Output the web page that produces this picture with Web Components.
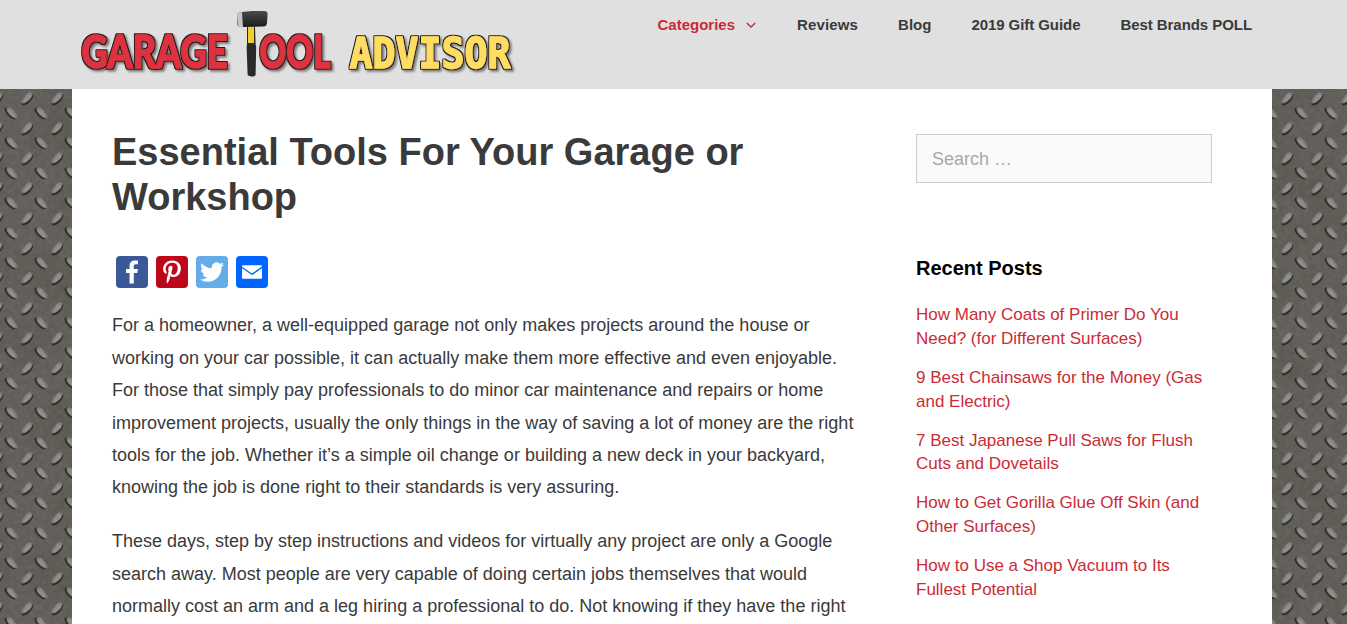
<!DOCTYPE html>
<html lang="en">
<head>
<meta charset="utf-8">
<title>Essential Tools For Your Garage or Workshop</title>
<style>
  html, body { margin: 0; height: 100%; overflow: hidden; }
  body { font-family: "Liberation Sans", Arial, sans-serif; color: #3a3a3a; }
</style>
</head>
<body>
<page-shell>
  <site-header slot="header">
    <nav-item active caret>Categories</nav-item>
    <nav-item style="letter-spacing:.15px">Reviews</nav-item>
    <nav-item>Blog</nav-item>
    <nav-item style="letter-spacing:-.07px">2019 Gift Guide</nav-item>
    <nav-item style="letter-spacing:-.06px">Best Brands POLL</nav-item>
  </site-header>
  <post-article>
    <span slot="title">Essential Tools For Your Garage or Workshop</span>
    <p>For a homeowner, a well-equipped garage not only makes projects around the house or working on your car possible, it can actually make them more effective and even enjoyable. For those that simply pay professionals to do minor car maintenance and repairs or home improvement projects, usually the only things in the way of saving a lot of money are the right tools for the job. Whether it’s a simple oil change or building a new deck in your backyard, knowing the job is done right to their standards is very assuring.</p>
    <p>These days, step by step instructions and videos for virtually any project are only a Google search away. Most people are very capable of doing certain jobs themselves that would normally cost an arm and a leg hiring a professional to do. Not knowing if they have the right</p>
  </post-article>
  <side-bar slot="aside">
    <search-box></search-box>
    <recent-posts>
      <a href="#">How Many Coats of Primer Do You Need? (for Different Surfaces)</a>
      <a href="#">9 Best Chainsaws for the Money (Gas and Electric)</a>
      <a href="#">7 Best Japanese Pull Saws for Flush Cuts and Dovetails</a>
      <a href="#">How to Get Gorilla Glue Off Skin (and Other Surfaces)</a>
      <a href="#">How to Use a Shop Vacuum to Its Fullest Potential</a>
    </recent-posts>
  </side-bar>
</page-shell>

<script>
// diamond plate texture for the page background, one big tile so the noise doesnt repeat too fast
function plateTile() {
  const lens = (x, y, angle) => `
    <g transform="translate(${x} ${y})">
      <ellipse cx="-.8" cy="1.500" rx="7.600" ry="3.300" transform="rotate(${angle})" fill="#1a1917" opacity=".7"/>
      <ellipse rx="7.200" ry="3" transform="rotate(${angle})" fill="#7b7b78"/>
      <ellipse cx="${angle < 0 ? 3 : -3}" cy="-2" rx="3" ry="1" transform="rotate(${angle})" fill="#7391b0" opacity=".7"/>
      <ellipse cy=".5" rx="5" ry="1.700" transform="rotate(${angle})" fill="#96938d" opacity=".8"/>
    </g>`;
  const svg = `<svg xmlns="http://www.w3.org/2000/svg" width="300" height="300">
    <defs>
      <filter id="n" x="0" y="0" width="100%" height="100%">
        <feTurbulence type="fractalNoise" baseFrequency="0.02" numOctaves="3" seed="7" stitchTiles="stitch"/>
        <feColorMatrix values="0 0 0 0 .12  0 0 0 0 .11  0 0 0 0 .1  3.400 0 0 0 -1.100"/>
      </filter>
      <filter id="g" x="0" y="0" width="100%" height="100%">
        <feTurbulence type="fractalNoise" baseFrequency="0.2" numOctaves="2" seed="2" stitchTiles="stitch"/>
        <feColorMatrix values="0 0 0 0 .65  0 0 0 0 .62  0 0 0 0 .56  1 0 0 0 -.35"/>
      </filter>
      <pattern id="p" width="30" height="30" patternUnits="userSpaceOnUse">
        ${lens(27, 8, -45)}${lens(-3, 8, -45)}${lens(12, 23, 45)}
      </pattern>
    </defs>
    <rect width="300" height="300" fill="#5c5852"/>
    <rect width="300" height="300" filter="url(#n)"/>
    <rect width="300" height="300" filter="url(#g)" opacity=".15"/>
    <rect width="300" height="300" fill="url(#p)"/>
  </svg>`;
  return `url("data:image/svg+xml,${encodeURIComponent(svg)}")`;
}

class PageShell extends HTMLElement {
  constructor() {
    super();
    this.attachShadow({ mode: "open" });
    this.shadowRoot.innerHTML = `
      <style>
        :host {
          display: flex;
          flex-direction: column;
          height: 100vh;
          overflow: hidden;
          background: ${plateTile()} 0 0;
        }
        .content {
          flex: 1;
          box-sizing: border-box;
          width: 1200px;
          margin-left: 72px;
          background: #fff;
          display: flex;
          padding: 0 60px 0 40px;
          gap: 60px;
        }
      </style>
      <slot name="header"></slot>
      <div class="content">
        <slot></slot>
        <slot name="aside"></slot>
      </div>
    `;
  }
}

class SiteHeader extends HTMLElement {
  constructor() {
    super();
    this.attachShadow({ mode: "open" });
    this.shadowRoot.innerHTML = `
      <style>
        :host {
          display: block;
          flex: none;
          height: 89px;
          background: #e0e0e0;
        }
        .inner {
          width: 1200px;
          margin-left: 72px;
          display: flex;
          justify-content: space-between;
          align-items: flex-start;
        }
        nav { display: flex; }
      </style>
      <div class="inner">
        <site-logo></site-logo>
        <nav><slot></slot></nav>
      </div>
    `;
  }
}

class SiteLogo extends HTMLElement {
  constructor() {
    super();
    this.attachShadow({ mode: "open" });
    this.shadowRoot.innerHTML = `
      <style>
        :host { display: block; height: 89px; margin-left: 6px; }
        svg { display: block; }
        text {
          font-family: Lato, "DejaVu Sans", sans-serif;
          font-weight: 900;
          font-size: 46px;
          stroke-width: 1.400px;
          stroke-linejoin: round;
        }
        .red { fill: #dd3340; stroke: #dd3340; }
        .yellow {
          fill: #ffdc64;
          stroke: #ffdc64;
          font-family: "DejaVu Sans Mono", monospace;
          font-weight: bold;
          font-size: 43px;
        }
      </style>
      <svg width="440" height="89" viewBox="0 0 440 89">
        <defs>
          <filter id="edge" x="-5%" y="-20%" width="110%" height="150%">
            <feMorphology in="SourceAlpha" operator="dilate" radius="1.300" result="fat"/>
            <feFlood flood-color="#241f1e"/>
            <feComposite in2="fat" operator="in" result="line"/>
            <feGaussianBlur in="fat" stdDeviation="1" result="soft"/>
            <feOffset in="soft" dx="2" dy="2" result="moved"/>
            <feFlood flood-color="#000" flood-opacity=".45"/>
            <feComposite in2="moved" operator="in" result="shade"/>
            <feMerge>
              <feMergeNode in="shade"/>
              <feMergeNode in="line"/>
              <feMergeNode in="SourceGraphic"/>
            </feMerge>
          </filter>
          <linearGradient id="head" x1="0" y1="0" x2="0" y2="1">
            <stop offset="0" stop-color="#4a4a48"/>
            <stop offset="1" stop-color="#1b1b1a"/>
          </linearGradient>
        </defs>
        <g filter="url(#edge)">
          <text class="red" data-x="3.500" data-w="146">GARAGE</text>
          <text class="red" data-x="181.500" data-w="71">OOL</text>
          <text class="yellow" data-x="271.500" data-w="161">ADVISOR</text>
        </g>
        <!-- the hammer stands in for the T -->
        <path d="M169 27h8l.6 17 .6 3-.6 27.500c-.2 1.500-1.600 2-3 2s-5-.5-5-2l-1-27.500 .4-3z" fill="#2a2a29"/>
        <rect x="170" y="27" width="6" height="16" fill="#f2cd2c"/>
        <path d="M159 13.500c4-2 12-2.500 27-2.500 3 0 3.800 1.500 3.500 4l-.5 8c-.2 2.500-1.500 3.500-4 3.500l-21 .5c-3 0-5-1-5-4z" fill="url(#head)"/>
        <path d="M159 13.500c1.500-.7 3-1.100 5-1.500l1 15.500c-3 0-5.500-1-5.500-4z" fill="#c4c6c6"/>
      </svg>
    `;
  }

  connectedCallback() {
    // squeeze each word to the width it has in the logo
    this.shadowRoot.querySelectorAll("text").forEach((t) => {
      const sx = t.dataset.w / t.getComputedTextLength();
      t.setAttribute("transform", `translate(${t.dataset.x} 68) scale(${sx} 1)`);
    });
  }
}

class NavItem extends HTMLElement {
  constructor() {
    super();
    this.attachShadow({ mode: "open" });
    const caret = this.hasAttribute("caret")
      ? `<svg width="10" height="6" viewBox="0 0 10 6"><path d="M.8 1L5 5l4.200-4" fill="none" stroke="currentColor" stroke-width="1.500"/></svg>`
      : "";
    this.shadowRoot.innerHTML = `
      <style>
        :host {
          display: flex;
          align-items: center;
          height: 48px;
          padding: 0 20px;
          font-size: 15px;
          font-weight: bold;
          color: #3a3a3a;
          cursor: pointer;
        }
        :host([active]) { color: #cb2b36; margin-right: 1px; }
        svg { margin-left: 11px; margin-top: 1px; }
      </style>
      <slot></slot>${caret}
    `;
  }
}

class PostArticle extends HTMLElement {
  constructor() {
    super();
    this.attachShadow({ mode: "open" });
    this.shadowRoot.innerHTML = `
      <style>
        :host {
          display: block;
          width: 744px;
          flex: none;
          padding-top: 41px;
          font-size: 18px;
          line-height: 32.4px;
          color: #3a3a3a;
        }
        h1 {
          margin: 0 0 36px;
          font-size: 38px;
          line-height: 45px;
          font-weight: bold;
        }
        ::slotted(p) { margin: 0 0 21.6px; }
      </style>
      <h1><slot name="title"></slot></h1>
      <share-bar></share-bar>
      <slot></slot>
    `;
  }
}

class ShareBar extends HTMLElement {
  constructor() {
    super();
    this.attachShadow({ mode: "open" });
    const icons = [
      ["#3b5998", "M17.78 27.5V17.008h3.522l.527-4.090h-4.050v-2.610c0-1.182.33-1.990 2.023-1.990h2.166V4.660c-.375-.05-1.660-.16-3.155-.16-3.123 0-5.260 1.905-5.260 5.405v3.016h-3.530v4.090h3.530V27.500h4.223z"],
      ["#bd081c", "M16.539 4.500c-6.277 0-9.442 4.500-9.442 8.253 0 2.272.86 4.293 2.705 5.046.303.125.574.005.662-.33.061-.231.205-.816.27-1.060.088-.331.053-.447-.191-.736-.532-.627-.873-1.439-.873-2.591 0-3.338 2.498-6.327 6.505-6.327 3.548 0 5.497 2.168 5.497 5.062 0 3.810-1.686 7.025-4.188 7.025-1.382 0-2.416-1.142-2.085-2.545.397-1.674 1.166-3.480 1.166-4.689 0-1.081-.581-1.983-1.782-1.983-1.413 0-2.548 1.462-2.548 3.419 0 1.247.421 2.091.421 2.091l-1.699 7.199c-.505 2.137-.076 4.755-.039 5.019.021.158.223.196.314.077.13-.17 1.813-2.247 2.384-4.324.162-.587.929-3.631.929-3.631.46.876 1.801 1.646 3.227 1.646 4.247 0 7.128-3.871 7.128-9.053.003-3.918-3.317-7.568-8.361-7.568z"],
      ["#64ade9", "M28 8.557a9.913 9.913 0 0 1-2.828.775 4.930 4.930 0 0 0 2.166-2.725 9.738 9.738 0 0 1-3.130 1.194 4.920 4.920 0 0 0-3.593-1.550 4.924 4.924 0 0 0-4.794 6.049c-4.090-.21-7.720-2.170-10.150-5.150a4.942 4.942 0 0 0-.665 2.477c0 1.710.87 3.214 2.190 4.100a4.968 4.968 0 0 1-2.230-.616v.06c0 2.390 1.700 4.380 3.952 4.830-.414.115-.85.174-1.297.174-.318 0-.626-.03-.928-.086a4.935 4.935 0 0 0 4.600 3.420 9.893 9.893 0 0 1-6.114 2.107c-.398 0-.79-.023-1.175-.068a13.953 13.953 0 0 0 7.550 2.213c9.056 0 14.010-7.507 14.010-14.013 0-.213-.005-.426-.015-.637.96-.695 1.795-1.560 2.455-2.550z"],
      ["#0166ff", "M26 21.250v-9s-9.100 6.350-9.984 6.680C15.144 18.616 6 12.250 6 12.250v9c0 1.250.266 1.500 1.500 1.500h17c1.266 0 1.500-.22 1.500-1.500zm-.015-10.765c0-.91-.265-1.235-1.485-1.235h-17c-1.255 0-1.500.39-1.500 1.300l.015.14s9.035 6.220 10 6.560c1.020-.395 9.985-6.700 9.985-6.700l-.015-.065z"],
    ];
    this.shadowRoot.innerHTML = `
      <style>
        :host {
          display: flex;
          gap: 8px;
          padding-left: 4px;
          margin-bottom: 21.4px;
        }
        svg { display: block; border-radius: 4px; }
      </style>
      ${icons.map(([bg, d]) => `
        <svg width="32" height="32" viewBox="0 0 32 32" style="background:${bg}"><path fill="#fff" d="${d}"/></svg>
      `).join("")}
    `;
  }
}

class SideBar extends HTMLElement {
  constructor() {
    super();
    this.attachShadow({ mode: "open" });
    this.shadowRoot.innerHTML = `
      <style>
        :host {
          display: block;
          flex: none;
          width: 296px;
          padding-top: 45px;
        }
      </style>
      <slot></slot>
    `;
  }
}

class SearchBox extends HTMLElement {
  constructor() {
    super();
    this.attachShadow({ mode: "open" });
    this.shadowRoot.innerHTML = `
      <style>
        :host { display: block; margin-bottom: 73px; }
        input {
          display: block;
          box-sizing: border-box;
          width: 100%;
          height: 49px;
          padding: 2px 15px 0;
          border: 1px solid #ccc;
          border-radius: 0;
          outline: 0;
          background: #fafafa;
          color: #666;
          font: 18px "Liberation Sans", Arial, sans-serif;
        }
        input::placeholder { color: #a9a9a9; opacity: 1; }
      </style>
      <input type="search" placeholder="Search …" aria-label="Search">
    `;
  }
}

class RecentPosts extends HTMLElement {
  constructor() {
    super();
    this.attachShadow({ mode: "open" });
    this.shadowRoot.innerHTML = `
      <style>
        :host { display: block; }
        h2 {
          margin: 0 0 23.4px;
          font-size: 20px;
          line-height: 24px;
          font-weight: bold;
          color: #000;
        }
        .list {
          display: flex;
          flex-direction: column;
          gap: 15px;
          font-size: 17px;
          line-height: 23.8px;
        }
        ::slotted(a) { display: block; color: #cb2b36; text-decoration: none; }
      </style>
      <h2>Recent Posts</h2>
      <div class="list"><slot></slot></div>
    `;
  }
}

customElements.define("page-shell", PageShell);
customElements.define("site-header", SiteHeader);
customElements.define("site-logo", SiteLogo);
customElements.define("nav-item", NavItem);
customElements.define("post-article", PostArticle);
customElements.define("share-bar", ShareBar);
customElements.define("side-bar", SideBar);
customElements.define("search-box", SearchBox);
customElements.define("recent-posts", RecentPosts);
</script>
</body>
</html>
